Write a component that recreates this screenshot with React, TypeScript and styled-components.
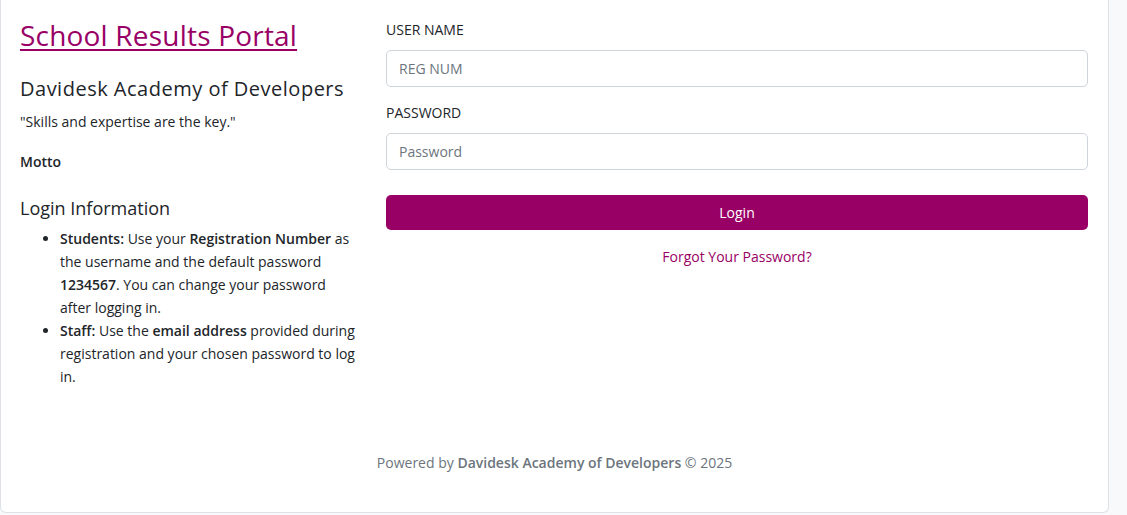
import React from "react";
import styled, { createGlobalStyle } from "styled-components";

const Global = createGlobalStyle`
  html, body { margin: 0; padding: 0; }
  body {
    background: #f8f9fa;
    font-family: "Open Sans", "Noto Sans", sans-serif;
    color: #212529;
    font-size: 14px;
  }
  * { box-sizing: border-box; }
`;

const Card = styled.div`
  display: flex;
  flex-direction: column;
  width: 1109px;
  min-height: 513px;
  background: #fff;
  border: 1px solid #dee2e6;
  border-top: none;
  border-radius: 0 0 6px 6px;
  padding: 18px 19px 39px;
`;

const Row = styled.div`
  display: grid;
  grid-template-columns: 339px 702px;
  column-gap: 27px;
`;

const Column = styled.div`
  display: flex;
  flex-direction: column;
`;

const TitleLink = styled.a`
  font-size: 28px;
  line-height: 34px;
  letter-spacing: 0.2px;
  color: #990066;
  text-decoration: underline;
  text-underline-offset: 3px;
  text-decoration-thickness: 2px;
  align-self: flex-start;
`;

const Heading = styled.h2<{ $size: number; $top: number; $spacing?: number }>`
  margin: ${(p) => p.$top}px 0 0;
  font-size: ${(p) => p.$size}px;
  line-height: ${(p) => Math.round(p.$size * 1.2)}px;
  letter-spacing: ${(p) => p.$spacing ?? 0}px;
  font-weight: 400;
`;

const Para = styled.p<{ $top: number; $bold?: boolean }>`
  margin: ${(p) => p.$top}px 0 0;
  line-height: 21px;
  font-weight: ${(p) => (p.$bold ? 600 : 400)};
`;

const Strong = styled.strong`
  font-weight: 600;
`;

const List = styled.ul`
  margin: 8px 0 0;
  padding-left: 40px;
  line-height: 23px;
`;

const Label = styled.label<{ $top: number }>`
  display: block;
  margin-top: ${(p) => p.$top}px;
  line-height: 21px;
  text-transform: uppercase;
`;

const Input = styled.input`
  display: block;
  width: 100%;
  height: 37px;
  margin-top: 10px;
  padding: 0 12px;
  border: 1px solid #ced4da;
  border-radius: 5px;
  font: inherit;
  font-size: 14px;
  color: #212529;
  background: #fff;
  &::placeholder { color: #6c757d; }
`;

const Button = styled.button`
  margin-top: 25px;
  width: 100%;
  height: 35px;
  border: none;
  border-radius: 5px;
  background: #990066;
  color: #fff;
  font: inherit;
  font-size: 14px;
`;

const Forgot = styled.a`
  margin-top: 16px;
  text-align: center;
  line-height: 21px;
  color: #990066;
  text-decoration: none;
`;

const Footer = styled.footer`
  margin-top: auto;
  text-align: center;
  line-height: 21px;
  color: #6c757d;
`;

export default function App() {
  return (
    <>
      <Global />
      <Card>
        <Row>
          <Column>
            <TitleLink href="#">School Results Portal</TitleLink>
            <Heading $size={20} $top={25} $spacing={0.5}>Davidesk Academy of Developers</Heading>
            <Para $top={10}>"Skills and expertise are the key."</Para>
            <Para $top={19} $bold>Motto</Para>
            <Heading $size={18} $top={25}>Login Information</Heading>
            <List>
              <li>
                <Strong>Students:</Strong> Use your <Strong>Registration Number</Strong> as the username and the default password{" "}
                <Strong>1234567</Strong>. You can change your password after logging in.
              </li>
              <li>
                <Strong>Staff:</Strong> Use the <Strong>email address</Strong> provided during registration and your chosen password to log in.
              </li>
            </List>
          </Column>
          <Column>
            <Label $top={1} htmlFor="u">User Name</Label>
            <Input id="u" placeholder="REG NUM" />
            <Label $top={15} htmlFor="p">Password</Label>
            <Input id="p" type="password" placeholder="Password" />
            <Button>Login</Button>
            <Forgot href="#">Forgot Your Password?</Forgot>
          </Column>
        </Row>
        <Footer>
          Powered by <Strong>Davidesk Academy of Developers</Strong> © 2025
        </Footer>
      </Card>
    </>
  );
}
